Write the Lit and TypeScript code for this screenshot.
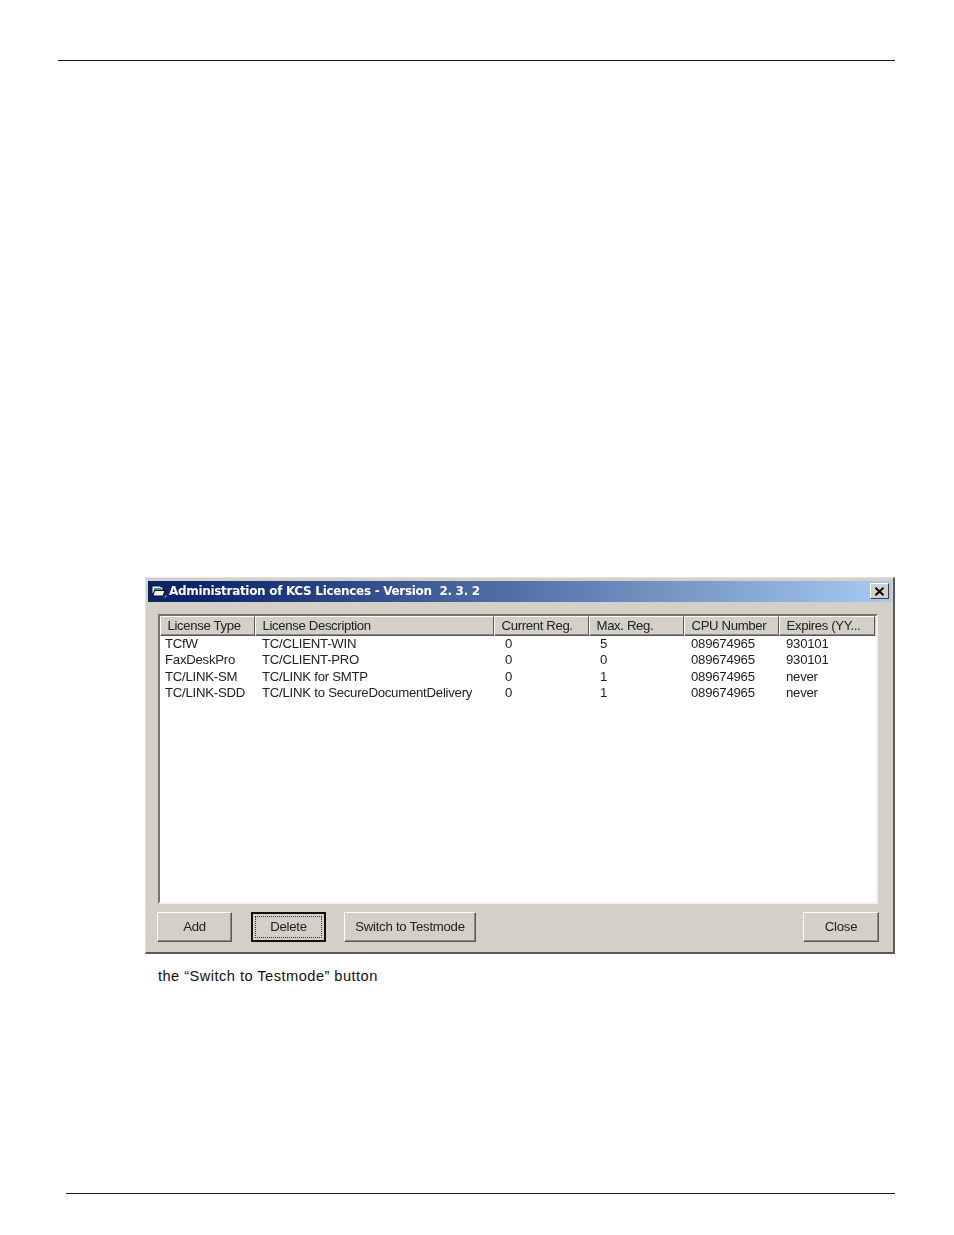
import { LitElement, html, css } from "lit";
import { customElement } from "lit/decorators.js";

const COLUMNS = ["License Type", "License Description", "Current Reg.", "Max. Reg.", "CPU Number", "Expires (YY..."];
const ROWS = [
  ["TCfW", "TC/CLIENT-WIN", "0", "5", "089674965", "930101"],
  ["FaxDeskPro", "TC/CLIENT-PRO", "0", "0", "089674965", "930101"],
  ["TC/LINK-SM", "TC/LINK for SMTP", "0", "1", "089674965", "never"],
  ["TC/LINK-SDD", "TC/LINK to SecureDocumentDelivery", "0", "1", "089674965", "never"],
];

@customElement("app-root")
export class AppRoot extends LitElement {
  static styles = css`
    :host { display: block; width: 954px; height: 1235px; background: #fff; overflow: hidden; font-family: "Liberation Sans", Arial, sans-serif; color: #000; }
    .page { display: flex; flex-direction: column; height: 1235px; box-sizing: border-box; padding-top: 60px; }
    .top-rule { height: 1px; background: #1a1a1a; margin: 0 59px 0 58px; }
    .dialog {
      width: 750px; height: 377px; box-sizing: border-box; margin: 516px 0 0 145px;
      background: #d4d0c8; padding: 3px 2px 3px;
      border-top: 1px solid #e4e1da; border-left: 1px solid #e4e1da;
      border-right: 2px solid #5a5a58; border-bottom: 2px solid #5a5a58;
      display: flex; flex-direction: column; filter: blur(0.4px);
    }
    .title {
      height: 21px; flex: none; display: flex; align-items: center; gap: 2px; padding: 0 2px 1px 3px; box-sizing: border-box;
      background: linear-gradient(90deg, #0a246a 0%, #0a246a 6%, #a6caf0 100%);
      color: #fff; font: bold 12px "DejaVu Sans", sans-serif; white-space: pre;
    }
    .title svg { flex: none; }
    .title span { flex: 1; letter-spacing: -0.31px; }
    .x {
      width: 19px; height: 16px; box-sizing: border-box; background: #d4d0c8; flex: none;
      border: 1px solid; border-color: #fff #404040 #404040 #fff;
      display: flex; align-items: center; justify-content: center;
    }
    .list {
      margin: 12px 13px 0 10px; height: 290px; flex: none; box-sizing: border-box; background: #fff;
      border: 2px solid; border-color: #77756f #f2f1ed #f2f1ed #77756f; overflow: hidden;
    }
    .head, .row { display: grid; grid-template-columns: 95px 239px 95px 95px 95px 96px; }
    .head { height: 20px; background: #d4d0c8; }
    .hcell {
      box-sizing: border-box; font-size: 13.2px; letter-spacing: -0.36px; line-height: 17px; padding-left: 6.5px; white-space: nowrap; overflow: hidden;
      border: 1px solid; border-color: #fff #5a5a58 #5a5a58 #fff; color: #222;
      box-shadow: inset 0 -1px 0 #8a8880;
    }
    .row { height: 16.4px; }
    .cell { font-size: 13.2px; letter-spacing: -0.25px; line-height: 16px; padding-left: 7px; white-space: nowrap; color: #222; }
    .cell.first { padding-left: 5px; }
    .cell.num { padding-left: 11px; }
    .actions { display: flex; padding: 8px 12px 0 9px; }
    .btn {
      height: 30px; box-sizing: border-box; background: #d4d0c8; color: #222; padding: 0 0 2px;
      font: 13.2px "Liberation Sans", Arial, sans-serif; letter-spacing: -0.25px;
      border: 1px solid; border-color: #fff #5a5a58 #5a5a58 #fff;
      box-shadow: inset -1px -1px 0 #8a8880;
      display: flex; align-items: center; justify-content: center;
    }
    .add { width: 75px; margin-right: 19px; }
    .delete { width: 75px; margin-right: 18px; border: 2px solid #111; box-shadow: none; padding: 2px; }
    .delete span { flex: 1; align-self: stretch; border: 1px dotted #333; display: flex; align-items: center; justify-content: center; padding-bottom: 1px; }
    .switch { width: 132px; }
    .close { width: 76px; margin-left: auto; }
    .caption { margin: 13px 0 0 158px; font-size: 14.67px; letter-spacing: 0.45px; line-height: 18px; color: #111; }
    .spacer { flex: 1; }
    .bottom-rule { height: 1px; background: #1a1a1a; margin: 0 59px 41px 66px; }
  `;

  render() {
    return html`
      <div class="page">
        <div class="top-rule"></div>
        <div class="dialog">
          <div class="title">
            <svg width="16" height="14" viewBox="0 0 16 14">
              <path d="M1 2h8l1 1h2v3H4L2 10H1z" fill="#fff" stroke="#111" stroke-width="1"/>
              <path d="M3 4h7v2H3z" fill="#2f9c95"/>
              <path d="M3.5 6.5H14L12 12H2z" fill="#f2f2f2" stroke="#111" stroke-width="1"/>
              <path d="M13 13h2v-2" fill="none" stroke="#8a8f9c" stroke-width="1"/>
            </svg>
            <span>Administration of KCS Licences - Version  2. 3. 2</span>
            <div class="x">
              <svg width="11" height="9" viewBox="0 0 11 9"><path d="M1.5 .8l8 7.4M9.5 .8l-8 7.4" stroke="#000" stroke-width="1.9" fill="none"/></svg>
            </div>
          </div>
          <div class="list">
            <div class="head">${COLUMNS.map((c) => html`<div class="hcell">${c}</div>`)}</div>
            <div class="rows">
              ${ROWS.map((r) => html`<div class="row">
                ${r.map((v, i) => html`<div class="cell ${i === 0 ? "first" : i === 2 || i === 3 ? "num" : ""}">${v}</div>`)}
              </div>`)}
            </div>
          </div>
          <div class="actions">
            <button class="btn add">Add</button>
            <button class="btn delete"><span>Delete</span></button>
            <button class="btn switch">Switch to Testmode</button>
            <button class="btn close">Close</button>
          </div>
        </div>
        <div class="caption">the “Switch to Testmode” button</div>
        <div class="spacer"></div>
        <div class="bottom-rule"></div>
      </div>
    `;
  }
}
